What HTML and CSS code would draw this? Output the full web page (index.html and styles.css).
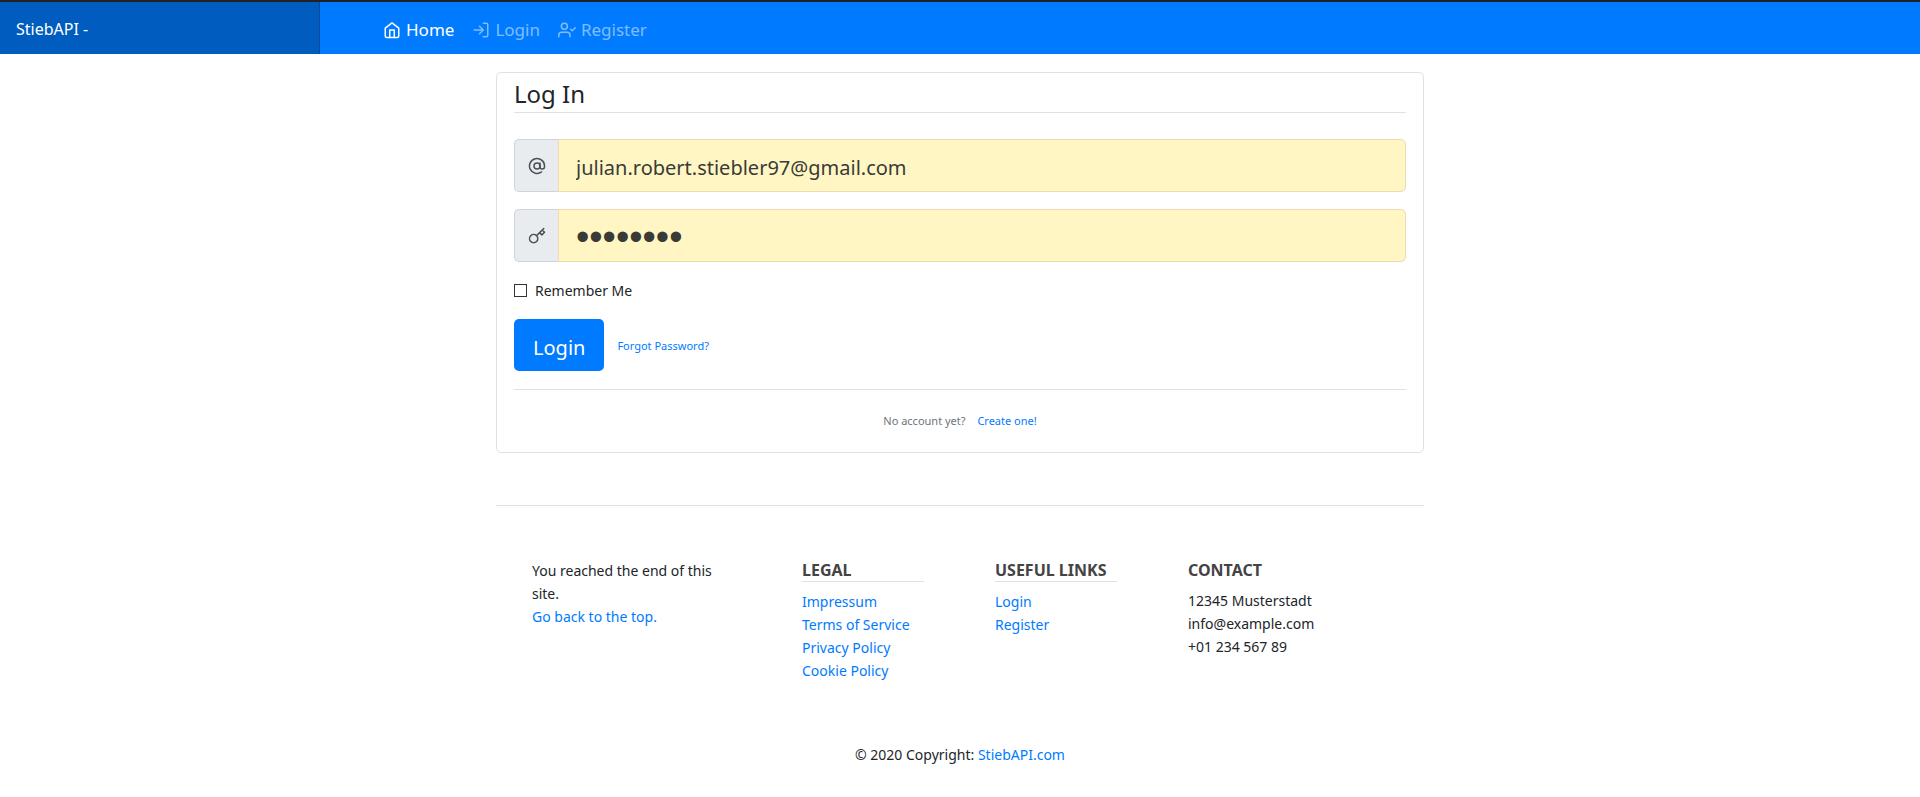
FILE: index.html
```html
<!DOCTYPE html>
<html lang="en">
<head>
<meta charset="utf-8">
<meta name="viewport" content="width=device-width, initial-scale=1">
<title>StiebAPI - Log In</title>
<link rel="stylesheet" href="styles.css">
</head>
<body id="top">
<header class="navbar">
  <a class="brand" href="#">StiebAPI -</a>
  <nav class="nav">
    <a class="nav-link active" href="#">
      <svg class="icon" viewBox="0 0 24 24"><path d="M3 9.500 12 2.500l9 7V20a2 2 0 0 1-2 2H5a2 2 0 0 1-2-2z"/><path d="M9 22V12h6v10"/></svg>
      Home</a>
    <a class="nav-link" href="#">
      <svg class="icon" viewBox="0 0 24 24"><path d="M15 3h4a2 2 0 0 1 2 2v14a2 2 0 0 1-2 2h-4"/><path d="m10 17 5-5-5-5M15 12H3"/></svg>
      Login</a>
    <a class="nav-link" href="#">
      <svg class="icon" viewBox="0 0 24 24"><path d="M16 21v-2a4 4 0 0 0-4-4H5a4 4 0 0 0-4 4v2"/><circle cx="8.500" cy="7" r="4"/><path d="m17 11 2 2 4-4"/></svg>
      Register</a>
  </nav>
</header>

<div class="container">
  <main class="card">
    <h1 class="card-title">Log In</h1>
    <form class="form">
      <div class="input-group">
        <label class="addon" for="email" aria-label="Email">
          <svg class="icon" viewBox="0 0 24 24"><circle cx="12" cy="12" r="4"/><path d="M16 8v5a3 3 0 0 0 6 0v-1a10 10 0 1 0-3.920 7.940"/></svg>
        </label>
        <input class="field" id="email" type="email" value="julian.robert.stiebler97@gmail.com">
      </div>
      <div class="input-group">
        <label class="addon" for="password" aria-label="Password">
          <svg class="icon" viewBox="0 0 24 24"><path d="M21 2l-2 2m-7.610 7.610a5.500 5.500 0 1 1-7.778 7.778 5.500 5.500 0 0 1 7.777-7.777zm0 0L15.500 7.500m0 0l3 3L22 7l-3-3m-3.500 3.500L19 4"/></svg>
        </label>
        <input class="field password" id="password" type="password" value="password">
      </div>
      <div class="check">
        <input class="check-box" id="remember" type="checkbox">
        <label for="remember">Remember Me</label>
      </div>
      <div class="actions">
        <button class="button" type="button">Login</button>
        <a class="small" href="#">Forgot Password?</a>
      </div>
    </form>
    <p class="signup small">No account yet? <a href="#">Create one!</a></p>
  </main>

  <footer class="footer">
    <div class="footer-grid">
      <p class="end-note">You reached the end of this site.<br><a href="#top">Go back to the top.</a></p>
      <section>
        <h2 class="footer-title ruled">Legal</h2>
        <ul class="links">
          <li><a href="#">Impressum</a></li>
          <li><a href="#">Terms of Service</a></li>
          <li><a href="#">Privacy Policy</a></li>
          <li><a href="#">Cookie Policy</a></li>
        </ul>
      </section>
      <section>
        <h2 class="footer-title ruled">Useful Links</h2>
        <ul class="links">
          <li><a href="#">Login</a></li>
          <li><a href="#">Register</a></li>
        </ul>
      </section>
      <section>
        <h2 class="footer-title">Contact</h2>
        <ul class="links">
          <li>12345 Musterstadt</li>
          <li>info@example.com</li>
          <li>+01 234 567 89</li>
        </ul>
      </section>
    </div>
    <p class="copyright">© 2020 Copyright: <a href="#">StiebAPI.com</a></p>
  </footer>
</div>
</body>
</html>
```
FILE: styles.css
```css
*, *::before, *::after { box-sizing: border-box; }

body {
  margin: 0;
  background: #fff;
  color: #212529;
  font-family: "Noto Sans", "Open Sans", sans-serif;
  font-size: 14px;
  line-height: 23px;
}

h1, h2, p, ul { margin: 0; padding: 0; }
ul { list-style: none; }
a { color: #007bff; text-decoration: none; }

.icon {
  flex: none;
  width: 18px;
  height: 18px;
  fill: none;
  stroke: currentColor;
  stroke-width: 2;
  stroke-linecap: round;
  stroke-linejoin: round;
}

.navbar {
  display: flex;
  min-height: 54px;
  border-top: 2px solid #1f2226;
  background: #007bff;
}

.brand {
  display: flex;
  align-items: center;
  width: 16.6667%;
  padding: 3px 16px 0;
  border-right: 1px solid #004a99;
  background: #005cbf;
  color: #fff;
  font-size: 16px;
}

.nav {
  display: flex;
  align-items: center;
  gap: 18px;
  padding: 3px 0 0 63px;
}

.nav-link {
  display: flex;
  align-items: center;
  gap: 5px;
  color: rgba(255, 255, 255, 0.5);
  font-size: 17px;
}

.nav-link.active { color: #fff; }

.container {
  width: 50%;
  margin: 0 auto;
  padding: 18px 16px 0;
}

.card {
  padding: 0 17px 20px;
  border: 1px solid #dee2e6;
  border-radius: 5px;
}

.card-title {
  padding: 4px 0 2px;
  border-bottom: 1px solid #dee2e6;
  font-size: 24px;
  font-weight: 400;
  line-height: 33px;
}

.form {
  padding: 26px 0 18px;
  border-bottom: 1px solid #dee2e6;
}

.input-group {
  display: flex;
  height: 53px;
  margin-bottom: 17px;
}

.addon {
  display: flex;
  align-items: center;
  justify-content: center;
  width: 44px;
  border: 1px solid #ced4da;
  border-right: 0;
  border-radius: 5px 0 0 5px;
  background: #e9ecef;
  color: #495057;
}

.field {
  flex: 1;
  min-width: 0;
  padding: 4px 17px 0;
  border: 1px solid #ecdcae;
  border-radius: 0 5px 5px 0;
  outline: 0;
  background: #fff6c4;
  color: #3a3b36;
  font: inherit;
  font-size: 20px;
  line-height: 30px;
}

.password {
  font-family: "Liberation Sans", sans-serif;
  font-size: 38px;
}

.check {
  display: flex;
  align-items: center;
  gap: 8px;
}

.check-box {
  appearance: none;
  width: 13px;
  height: 13px;
  margin: 0;
  border: 1px solid #333;
  background: #fff;
}

.actions {
  display: flex;
  align-items: center;
  gap: 13px;
  margin-top: 17px;
}

.button {
  height: 52px;
  padding: 4px 19px 0;
  border: 0;
  border-radius: 5px;
  background: #007bff;
  color: #fff;
  font: inherit;
  font-size: 20px;
}

.small { font-size: 11px; }

.signup {
  padding-top: 19px;
  color: #6c757d;
  text-align: center;
}

.signup a { margin-left: 9px; }

.footer {
  margin-top: 52px;
  padding-bottom: 31px;
  border-top: 1px solid #dee2e6;
}

.footer-grid {
  display: grid;
  grid-template-columns: 270fr 193fr 193fr 193fr;
  padding: 53px 43px 0 36px;
}

.end-note { padding-right: 70px; }

.footer-title {
  width: 122px;
  margin-bottom: 8px;
  color: #444;
  font-size: 16px;
  font-weight: 700;
  line-height: 22px;
  text-transform: uppercase;
}

.footer-title.ruled { border-bottom: 1px solid #dee2e6; }

.copyright {
  padding-top: 61px;
  text-align: center;
}
```
